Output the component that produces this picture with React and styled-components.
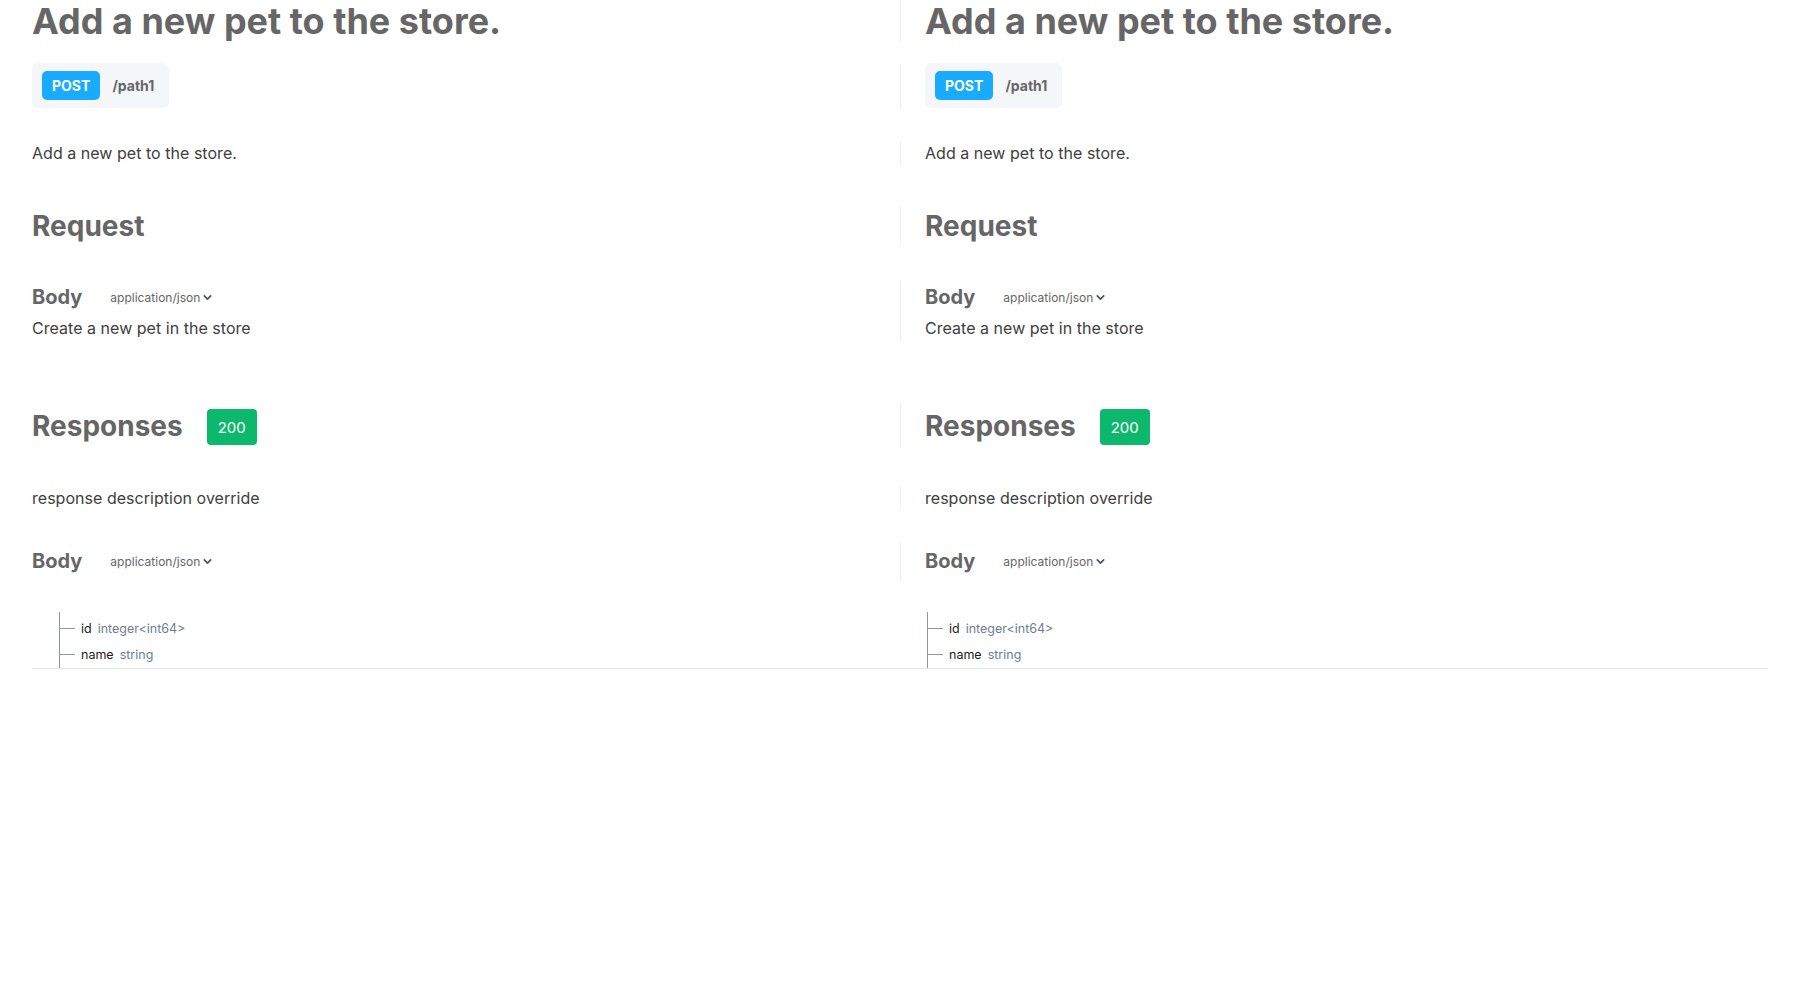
import styled, { createGlobalStyle } from "styled-components"

const GlobalStyle = createGlobalStyle`
    body {
        margin: 0;
        background: #fff;
        font-family: Inter, "Noto Sans", sans-serif;
    }
`

const Page = styled.div`
    padding: 0 32px;
`

const Columns = styled.div`
    display: grid;
    grid-template-columns: 1fr 1fr;
    border-bottom: 1px solid #e5e7eb;
`

const Column = styled.div`
    display: flex;
    flex-direction: column;
    min-width: 0;
`

const Block = styled.div`
    margin-top: ${p => p.$gap || 0}px;
    ${p => p.$bordered && `
        border-left: 1px solid #f0f0f0;
        padding-left: 24px;
    `}
`

const Title = styled.h1`
    margin: 0;
    padding-top: 1px;
    font-size: 36px;
    line-height: 41px;
    font-weight: 700;
    color: #666;
`

const PathPill = styled.div`
    display: inline-flex;
    align-items: center;
    gap: 12px;
    padding: 8px 15px 8px 10px;
    background: #f5f6f9;
    border-radius: 6px;
`

const MethodBadge = styled.span`
    display: inline-block;
    padding: 0 10px;
    height: 29px;
    line-height: 29px;
    border-radius: 5px;
    background: #19abff;
    color: #fff;
    font-size: 14px;
    font-weight: 700;
`

const PathText = styled.span`
    font-size: 14px;
    font-weight: 700;
    color: #666;
`

const Text = styled.p`
    margin: ${p => p.$top || 0}px 0 0;
    font-size: 16px;
    line-height: 24px;
    letter-spacing: 0.03px;
    color: #404040;
`

const SectionHeading = styled.div`
    display: flex;
    align-items: center;
    gap: 24px;
    height: ${p => p.$height || 40}px;
`

const H2 = styled.h2`
    margin: 0;
    font-size: 28px;
    line-height: 40px;
    font-weight: 700;
    color: #666;
`

const StatusBadge = styled.span`
    display: inline-flex;
    align-items: center;
    justify-content: center;
    width: 50px;
    height: 36px;
    margin-top: 2px;
    border-radius: 4px;
    background: #0bb86c;
    color: #fff;
    font-size: 15px;
`

const BodyRow = styled.div`
    display: flex;
    align-items: center;
    gap: 28px;
    height: ${p => p.$height || 32}px;
`

const H3 = styled.h3`
    margin: 0;
    font-size: 20px;
    line-height: 28px;
    font-weight: 700;
    color: #666;
`

const MediaSelect = styled.span`
    display: inline-flex;
    align-items: center;
    gap: 3px;
    font-size: 12px;
    color: #666;
    padding-top: 1px;
`

const Tree = styled.div`
    margin: 32px 0 0 27px;
    padding-top: 3px;
    border-left: 1px solid #8d97a8;
`

const TreeRow = styled.div`
    display: flex;
    align-items: center;
    height: 26.5px;
    font-size: 12.5px;
`

const Branch = styled.span`
    width: 15px;
    height: 1px;
    background: #8d97a8;
    margin-right: 6px;
`

const PropName = styled.span`
    color: #1a1a1a;
    margin-right: 6px;
`

const PropType = styled.span`
    color: #6f7d93;
`

function Chevron() {
    return <svg width="9" height="9" viewBox="0 0 10 10" fill="none">
        <path d="M1.5 3.2 L5 6.7 L8.5 3.2" stroke="#555" strokeWidth="2" strokeLinecap="round" strokeLinejoin="round" />
    </svg>
}

const properties = [
    { name: "id", type: "integer<int64>" },
    { name: "name", type: "string" },
]

function Operation({ bordered }) {
    return <Column>
        <Block $bordered={bordered}>
            <Title>Add a new pet to the store.</Title>
        </Block>
        <Block $bordered={bordered} $gap={21}>
            <PathPill>
                <MethodBadge>POST</MethodBadge>
                <PathText>/path1</PathText>
            </PathPill>
        </Block>
        <Block $bordered={bordered} $gap={33}>
            <Text>Add a new pet to the store.</Text>
        </Block>
        <Block $bordered={bordered} $gap={41}>
            <H2>Request</H2>
        </Block>
        <Block $bordered={bordered} $gap={35}>
            <BodyRow>
                <H3>Body</H3>
                <MediaSelect>application/json <Chevron /></MediaSelect>
            </BodyRow>
            <Text $top={3}>Create a new pet in the store</Text>
        </Block>
        <Block $bordered={bordered} $gap={64}>
            <SectionHeading $height={44}>
                <H2>Responses</H2>
                <StatusBadge>200</StatusBadge>
            </SectionHeading>
        </Block>
        <Block $bordered={bordered} $gap={38}>
            <Text>response description override</Text>
        </Block>
        <Block $bordered={bordered} $gap={32}>
            <BodyRow $height={38}>
                <H3>Body</H3>
                <MediaSelect>application/json <Chevron /></MediaSelect>
            </BodyRow>
        </Block>
        <Tree>
            {properties.map(prop => <TreeRow key={prop.name}>
                <Branch />
                <PropName>{prop.name}</PropName>
                <PropType>{prop.type}</PropType>
            </TreeRow>)}
        </Tree>
    </Column>
}

export default function App() {
    return <>
        <GlobalStyle />
        <Page>
            <Columns>
                <Operation />
                <Operation bordered />
            </Columns>
        </Page>
    </>
}
